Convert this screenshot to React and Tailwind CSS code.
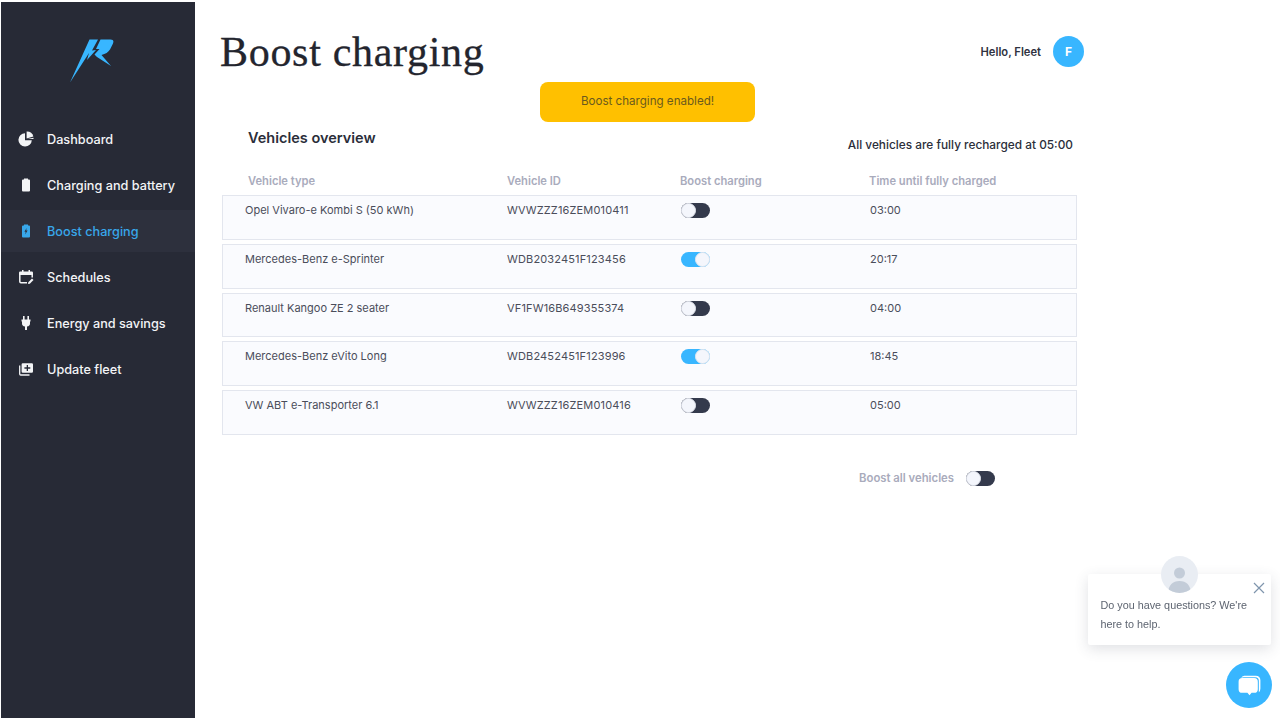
import { Fragment } from 'react';

const menuItems = [
  { label: 'Dashboard', icon: 'pie' },
  { label: 'Charging and battery', icon: 'battery' },
  { label: 'Boost charging', icon: 'boost', active: true },
  { label: 'Schedules', icon: 'calendar' },
  { label: 'Energy and savings', icon: 'plug' },
  { label: 'Update fleet', icon: 'add' },
];

const vehicles = [
  { type: 'Opel Vivaro-e Kombi S (50 kWh)', id: 'WVWZZZ16ZEM010411', on: false, time: '03:00' },
  { type: 'Mercedes-Benz e-Sprinter', id: 'WDB2032451F123456', on: true, time: '20:17' },
  { type: 'Renault Kangoo ZE 2 seater', id: 'VF1FW16B649355374', on: false, time: '04:00' },
  { type: 'Mercedes-Benz eVito Long', id: 'WDB2452451F123996', on: true, time: '18:45' },
  { type: 'VW ABT e-Transporter 6.1', id: 'WVWZZZ16ZEM010416', on: false, time: '05:00' },
];

const Logo = () => (
  <svg width="46" height="46" viewBox="68 38 46 46" className="block">
    <path d="M70 82.5 L89.5 39.5 L98 39.5 L92 50.5 L96 50 L87 60 L89 53 Z" fill="#38b6ff" />
    <path d="M100.5 39.5 L110.5 39.5 Q114.5 39.5 113 43.5 L110 49.5 Q107.5 53.5 101.5 55 L111 66 L97 57 L94.5 54.5 L99.5 49 L96 49 Z" fill="#38b6ff" />
  </svg>
);

const NavIcon = ({ name }) => {
  if (name === 'pie') {
    return (
      <svg width="16" height="16" viewBox="0 0 16 16" fill="currentColor">
        <path d="M7 2.2 A6.7 6.7 0 1 0 13.8 9.2 L7 9.2 Z" />
        <path d="M8.6 0.6 A6.8 6.8 0 0 1 15.4 5.4 L8.6 7.4 Z" />
        <path d="M15.5 6.8 A7 7 0 0 1 15.5 8 L9.5 8 Z" />
      </svg>
    );
  }
  if (name === 'battery') {
    return (
      <svg width="16" height="16" viewBox="0 0 16 16" fill="currentColor">
        <path d="M6 1.5 H10 V2.5 H11 Q12 2.5 12 3.5 V13.5 Q12 14.5 11 14.5 H5 Q4 14.5 4 13.5 V3.5 Q4 2.5 5 2.5 H6 Z" />
      </svg>
    );
  }
  if (name === 'boost') {
    return (
      <svg width="16" height="16" viewBox="0 0 16 16">
        <path fill="currentColor" d="M6 1.5 H10 V2.5 H11 Q12 2.5 12 3.5 V13.5 Q12 14.5 11 14.5 H5 Q4 14.5 4 13.5 V3.5 Q4 2.5 5 2.5 H6 Z" />
        <path fill="#2d303d" d="M8.6 5 L6.4 8.8 H7.7 L7.2 11.6 L9.6 7.6 H8.2 Z" />
      </svg>
    );
  }
  if (name === 'calendar') {
    return (
      <svg width="16" height="16" viewBox="0 0 16 16" fill="none" stroke="currentColor">
        <path strokeWidth="1.5" d="M9 13.7 H3 Q1.8 13.7 1.8 12.5 V6" />
        <path strokeWidth="1.5" d="M14.2 6 V8.5" />
        <path fill="currentColor" stroke="none" d="M1 3.8 Q1 2.6 2.2 2.6 H4 V1 H5.5 V2.6 H10.5 V1 H12 V2.6 H13.8 Q15 2.6 15 3.8 V6 H1 Z" />
        <path fill="currentColor" stroke="none" d="M14 9.5 L15.5 11 L11.8 14.7 L10 15 L10.3 13.2 Z" />
      </svg>
    );
  }
  if (name === 'plug') {
    return (
      <svg width="16" height="16" viewBox="0 0 16 16" fill="currentColor">
        <path d="M5 1 H6.6 V4.5 H9.4 V1 H11 V4.5 H12.5 V6.5 H12 V8.5 Q12 11 9 11.6 V15 H7 V11.6 Q4 11 4 8.5 V6.5 H3.5 V4.5 H5 Z" />
      </svg>
    );
  }
  return (
    <svg width="16" height="16" viewBox="0 0 16 16" fill="none">
      <path stroke="currentColor" strokeWidth="1.3" d="M1.7 4.5 V13 Q1.7 14 2.7 14 H11.5" />
      <path fill="currentColor" fillRule="evenodd" d="M4.8 2.2 H13.8 Q15 2.2 15 3.4 V10.6 Q15 11.8 13.8 11.8 H4.8 Q3.6 11.8 3.6 10.6 V3.4 Q3.6 2.2 4.8 2.2 Z M8.7 4 V6.3 H6.4 V7.7 H8.7 V10 H10 V7.7 H12.3 V6.3 H10 V4 Z" />
    </svg>
  );
};

const Toggle = ({ on }) => (
  <div className={`flex h-[15px] w-[29px] rounded-full ${on ? 'justify-end bg-[#38b6ff]' : 'justify-start bg-[#343a4c]'}`}>
    <div className="h-[15px] w-[15px] rounded-full border border-[#e4e7ef] bg-[#f4f6fc]" />
  </div>
);

const VehicleRow = ({ vehicle }) => (
  <div className="flex h-[44.75px] items-start border border-[#e3e6ee] bg-[#fafbfe] pt-[7px] text-[11px] leading-[15px] text-[#4a4d5a]">
    <div className="w-[284px] pl-[22px]">{vehicle.type}</div>
    <div className="w-[174px] tracking-[0.15px]">{vehicle.id}</div>
    <div className="w-[189px]"><Toggle on={vehicle.on} /></div>
    <div>{vehicle.time}</div>
  </div>
);

const ChatWidget = () => (
  <Fragment>
    <div className="fixed left-[1088px] top-[574px] h-[71px] w-[183px] rounded-[2px] bg-white pl-[12.5px] pr-[12px] pt-[22px] font-['Liberation_Sans',sans-serif] text-[10.8px] leading-[19px] text-[#5d6470] shadow-[0_4px_14px_rgba(60,70,90,0.16)]">
      Do you have questions? We're here to help.
      <svg width="12" height="12" viewBox="0 0 12 12" className="absolute right-[6px] top-[8px]" stroke="#7f95ad" strokeWidth="1.2">
        <path d="M1 1 L11 11 M11 1 L1 11" />
      </svg>
    </div>
    <div className="fixed left-[1161px] top-[556px] h-[37px] w-[37px] overflow-hidden rounded-full bg-[#e9edf3]">
      <svg width="37" height="37" viewBox="0 0 37 37" fill="#c3ccd8">
        <circle cx="18.5" cy="17" r="5.5" />
        <path d="M7 37 Q8 25 18.5 25 Q29 25 30 37 Z" />
      </svg>
    </div>
    <div className="fixed left-[1226px] top-[662px] flex h-[46px] w-[46px] items-center justify-center rounded-full bg-[#38b6ff]">
      <svg width="27" height="27" viewBox="0 0 26 26" fill="white">
        <path d="M5 6 Q5.5 3.5 8 3.5 H19 Q23.5 3.5 23.5 8 V16 Q23.5 18.5 22 19.5 V8.5 Q22 5 18.5 5 H7.5 Q6 5 5 6 Z" />
        <path d="M6 5.8 H17.5 Q21 5.8 21 9.3 V16.5 Q21 20 17.5 20 H15 L13 22.5 L11 20 H6 Q2.5 20 2.5 16.5 V9.3 Q2.5 5.8 6 5.8 Z" />
      </svg>
    </div>
  </Fragment>
);

const App = () => (
  <div className="flex h-[720px] w-[1280px] overflow-hidden bg-white font-['Inter',sans-serif]">
    <aside className="mb-[2px] ml-[1px] mt-[2px] w-[194px] shrink-0 bg-[#272a36]">
      <div className="flex h-[116px] items-start pl-[67px] pt-[36px]">
        <Logo />
      </div>
      <nav className="flex flex-col gap-[4px]">
        {menuItems.map((item) => (
          <div
            key={item.label}
            className={`flex h-[42px] items-center gap-[13px] pl-[17px] text-[12.7px] font-medium ${item.active ? 'bg-[#2d303d] text-[#38a7ea]' : 'text-[#f3f4f6]'}`}
          >
            <NavIcon name={item.icon} />
            <span className="pt-[1px]">{item.label}</span>
          </div>
        ))}
      </nav>
    </aside>

    <main className="w-[890px] shrink-0 pl-[27px]">
      <div className="flex h-[82px] items-start justify-between pr-[1px] pt-[29px]">
        <h1 className="-ml-[2px] font-['Liberation_Serif',serif] text-[42px] leading-[46px] tracking-[0.7px] text-[#23252e] [-webkit-text-stroke:0.3px_#23252e]">Boost charging</h1>
        <div className="flex items-center gap-[12px] pt-[7px]">
          <span className="pt-[1px] text-[11.2px] font-semibold text-[#2f3240]">Hello, Fleet</span>
          <div className="flex h-[31px] w-[31px] items-center justify-center rounded-full bg-[#38b6ff] text-[12px] font-bold text-white">F</div>
        </div>
      </div>

      <div className="ml-[318px] flex h-[40px] w-[215px] items-center justify-center rounded-[8px] bg-[#ffc000] text-[11.6px] text-[#6b5a1e]">
        Boost charging enabled!
      </div>

      <div className="flex h-[38px] items-start justify-between pl-[26px] pr-[12px] pt-[7px]">
        <h2 className="text-[14.5px] font-semibold leading-[18px] text-[#2b2e3a]">Vehicles overview</h2>
        <span className="pt-[9px] text-[11.85px] font-medium leading-[15px] text-[#2b2e3a]">All vehicles are fully recharged at 05:00</span>
      </div>

      <div className="flex h-[35px] items-start pt-[14px] text-[11.2px] font-semibold leading-[15px] text-[#a9abbc]">
        <div className="w-[285px] pl-[26px]">Vehicle type</div>
        <div className="w-[173px]">Vehicle ID</div>
        <div className="w-[189px]">Boost charging</div>
        <div>Time until fully charged</div>
      </div>

      <div className="flex w-[855px] flex-col gap-[4px]">
        {vehicles.map((vehicle) => (
          <VehicleRow key={vehicle.id} vehicle={vehicle} />
        ))}
      </div>

      <div className="flex w-[773px] items-center justify-end gap-[12px] pt-[35px] text-[11.3px] font-semibold text-[#a9abbc]">
        <span>Boost all vehicles</span>
        <Toggle on={false} />
      </div>
    </main>

    <ChatWidget />
  </div>
);

export default App;
